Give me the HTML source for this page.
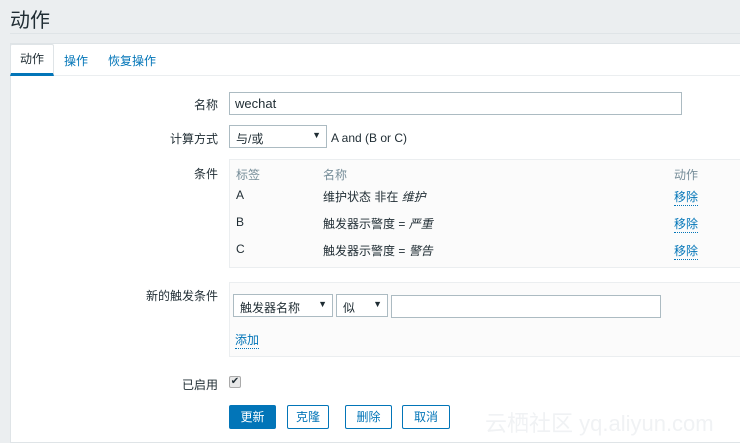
<!DOCTYPE html>
<html><head><meta charset="utf-8"><style>
*{box-sizing:border-box;margin:0;padding:0}
body{width:740px;height:443px;background:#ebeef0;font-family:"Liberation Sans","Noto Sans CJK SC",sans-serif;font-size:12px;color:#1f2c33;position:relative;overflow:hidden}
.a{position:absolute}
.lbl{position:absolute;right:522px;text-align:right;white-space:nowrap}
.sel{position:absolute;border:1px solid #acbbc2;background:#fff;height:23px;padding:4px 6px;font-size:12px}
.sel:after{content:"▼";position:absolute;right:5px;top:4px;font-size:9px}
.lnk{color:#0275b8;border-bottom:1px dotted #0275b8}
.btn{position:absolute;top:405px;height:24px;border:1px solid #0275b8;border-radius:2px;color:#0275b8;background:#fff;text-align:center;line-height:22px}
</style></head><body>
<div class="a" style="left:10px;top:4px;font-size:20px;color:#1f2c33">动作</div>
<div class="a" style="left:10px;top:33px;width:730px;height:1px;background:#dfe4e7"></div>
<div class="a" style="left:10px;top:43px;width:730px;height:400px;background:#fff;border:1px solid #dfe4e7;border-right:none"></div>
<div class="a" style="left:10px;top:75px;width:730px;height:1px;background:#ebeef0"></div>
<div class="a" style="left:10px;top:44px;width:44px;height:32px;border:1px solid #dfe4e7;border-bottom:3px solid #0275b8;border-radius:2px 2px 0 0;text-align:center;line-height:28px">动作</div>
<div class="a" style="left:64px;top:52px;color:#0275b8">操作</div>
<div class="a" style="left:108px;top:52px;color:#0275b8">恢复操作</div>

<div class="lbl" style="top:96px">名称</div>
<div class="a" style="left:229px;top:92px;width:453px;height:23px;border:1px solid #acbbc2;padding:3px 5px;font-size:13px">wechat</div>
<div class="lbl" style="top:130px">计算方式</div>
<div class="sel" style="left:229px;top:125px;width:98px">与/或</div>
<div class="a" style="left:331px;top:131px">A and (B or C)</div>

<div class="lbl" style="top:165px">条件</div>
<div class="a" style="left:229px;top:159px;width:520px;height:109px;background:#fbfbfb;border:1px solid #ebeef0"></div>
<div class="a" style="left:236px;top:166px;color:#768d99">标签</div>
<div class="a" style="left:323px;top:166px;color:#768d99">名称</div>
<div class="a" style="left:674px;top:166px;color:#768d99">动作</div>
<div class="a" style="left:236px;top:188px">A</div><div class="a" style="left:323px;top:188px">维护状态 非在 <i>维护</i></div><div class="a lnk" style="left:674px;top:188px">移除</div>
<div class="a" style="left:236px;top:215px">B</div><div class="a" style="left:323px;top:215px">触发器示警度 = <i>严重</i></div><div class="a lnk" style="left:674px;top:215px">移除</div>
<div class="a" style="left:236px;top:242px">C</div><div class="a" style="left:323px;top:242px">触发器示警度 = <i>警告</i></div><div class="a lnk" style="left:674px;top:242px">移除</div>

<div class="lbl" style="top:287px">新的触发条件</div>
<div class="a" style="left:229px;top:282px;width:520px;height:75px;background:#fbfbfb;border:1px solid #ebeef0"></div>
<div class="sel" style="left:233px;top:294px;width:100px">触发器名称</div>
<div class="sel" style="left:336px;top:294px;width:52px">似</div>
<div class="a" style="left:391px;top:295px;width:270px;height:23px;border:1px solid #acbbc2;background:#fff"></div>
<div class="a lnk" style="left:235px;top:331px">添加</div>

<div class="lbl" style="top:376px">已启用</div>
<div class="a" style="left:229px;top:376px;width:12px;height:12px;border:1px solid #aaa;border-radius:2px;background:#e8e8e8;font-size:10px;line-height:10px;text-align:center">✔</div>

<div class="btn" style="left:229px;width:47px;background:#0275b8;color:#fff">更新</div>
<div class="btn" style="left:287px;width:42px">克隆</div>
<div class="btn" style="left:345px;width:47px">删除</div>
<div class="btn" style="left:402px;width:48px">取消</div>
<div class="a" style="left:485px;top:406px;font-size:22px;color:#f0f2f4">云栖社区 yq.aliyun.com</div>
</body></html>
